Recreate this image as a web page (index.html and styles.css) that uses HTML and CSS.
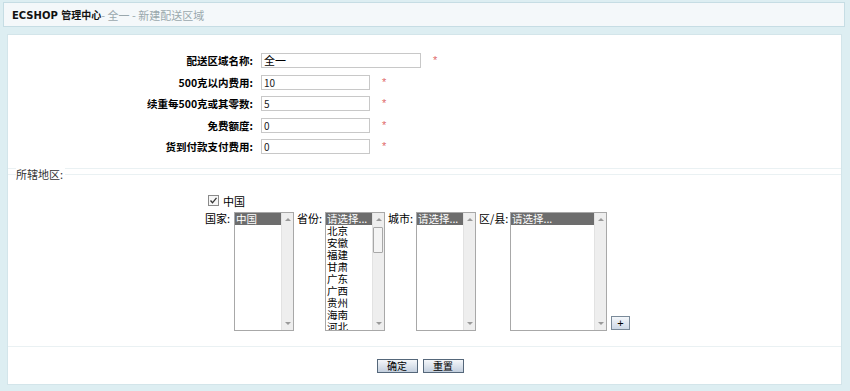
FILE: index.html
```html
<!DOCTYPE html>
<html>
<head>
<meta charset="utf-8">
<link rel="stylesheet" href="styles.css">
</head>
<body>
<div class="header"><span class="brand">ECSHOP 管理中心</span><span class="crumb">- 全一 - 新建配送区域</span></div>
<div class="main">
  <div class="form-section">
    <div class="row"><div class="label">配送区域名称:</div><div class="input wide">全一</div><span class="req">*</span></div>
    <div class="row"><div class="label">500克以内费用:</div><div class="input">10</div><span class="req">*</span></div>
    <div class="row"><div class="label">续重每500克或其零数:</div><div class="input">5</div><span class="req">*</span></div>
    <div class="row"><div class="label">免费额度:</div><div class="input">0</div><span class="req">*</span></div>
    <div class="row"><div class="label">货到付款支付费用:</div><div class="input">0</div><span class="req">*</span></div>
  </div>
  <div class="fieldset">
    <div class="legend">所辖地区:</div>
    <div class="region">
      <div class="check-row"><span class="checkbox"><svg width="9" height="9" viewBox="0 0 9 9"><path d="M1.5 4.5 L3.5 6.8 L7.5 1.8" fill="none" stroke="#333" stroke-width="1.3"/></svg></span><span class="check-label">中国</span></div>
      <div class="selects">
        <span class="sel-label l29">国家:</span>
        <div class="listbox w60">
          <div class="opts"><div class="opt selected">中国</div></div>
          <div class="sbar"><span class="arr up"></span><span class="arr down"></span></div>
        </div>
        <span class="sel-label l28">省份:</span>
        <div class="listbox w60">
          <div class="opts"><div class="opt selected">请选择...</div><div class="opt">北京</div><div class="opt">安徽</div><div class="opt">福建</div><div class="opt">甘肃</div><div class="opt">广东</div><div class="opt">广西</div><div class="opt">贵州</div><div class="opt">海南</div><div class="opt">河北</div></div>
          <div class="sbar"><span class="arr up"></span><span class="thumb"></span><span class="arr down"></span></div>
        </div>
        <span class="sel-label l28">城市:</span>
        <div class="listbox w60">
          <div class="opts"><div class="opt selected">请选择...</div></div>
          <div class="sbar"><span class="arr up"></span><span class="arr down"></span></div>
        </div>
        <span class="sel-label l31">区/县:</span>
        <div class="listbox w97">
          <div class="opts"><div class="opt selected">请选择...</div></div>
          <div class="sbar"><span class="arr up"></span><span class="arr down"></span></div>
        </div>
        <div class="plus">+</div>
      </div>
    </div>
  </div>
  <div class="buttons"><span class="btn">确定</span><span class="btn">重置</span></div>
</div>
</body>
</html>
```
FILE: styles.css
```css
html, body { margin: 0; padding: 0; }
body {
  background: #ddeef2;
  font-family: "Liberation Sans", "Noto Sans CJK SC", sans-serif;
  font-size: 11px;
  color: #000;
  width: 850px;
  height: 391px;
  overflow: hidden;
}
.header {
  margin: 2px 5px 0 3px;
  height: 23px;
  border: 1px solid #c6dde4;
  background: #f4f8fa;
  display: flex;
  align-items: center;
  padding-left: 8px;
  font-size: 11px;
}
.brand { font-family: "DejaVu Sans", "Noto Sans CJK SC", sans-serif; font-weight: bold; font-size: 10px; color: #111; }
.crumb { font-family: "Noto Sans CJK SC", sans-serif; color: #9aa8ad; font-size: 11px; }
.main {
  margin: 7px 8px 0 7px;
  height: 351px;
  background: #fff;
  border: 1px solid #d3e5ea;
  box-sizing: border-box;
  display: flex;
  flex-direction: column;
}
.form-section {
  padding-top: 15px;
  height: 118px;
  border-bottom: 1px solid #eaf1f3;
  flex: none;
}
.row {
  display: flex;
  align-items: center;
  height: 21.5px;
}
.label {
  width: 253px;
  text-align: right;
  font-family: "Noto Sans CJK SC", sans-serif;
  font-weight: bold;
  font-size: 10.5px;
  line-height: 13px;
  padding-right: 8px;
  box-sizing: border-box;
}
.input {
  width: 109px;
  height: 15px;
  border: 1px solid #c8c8c8;
  box-sizing: border-box;
  font-family: "Noto Sans CJK SC", "Liberation Sans", sans-serif;
  font-size: 10px;
  line-height: 13px;
  padding-left: 2px;
  color: #222;
}
.input.wide { width: 160px; color: #000; font-size: 11px; }
.req { color: #e06a6a; margin-left: 12px; font-size: 11px; line-height: 11px; }
.fieldset {
  margin-top: 5px;
  border-top: 1px solid #eaf1f3;
  border-bottom: 1px solid #eaf1f3;
  height: 171px;
  position: relative;
  flex: none;
}
.legend {
  position: absolute;
  top: -7px;
  left: 8px;
  background: #fff;
  padding-right: 2px;
  font-family: "Noto Sans CJK SC", sans-serif;
  font-size: 11px;
  line-height: 12px;
  color: #333;
}
.region { padding-left: 197px; padding-top: 20px; }
.check-row { display: flex; align-items: center; height: 11px; margin-left: 3px; }
.checkbox {
  width: 9px; height: 9px; border: 1px solid #8a8a8a; background: #f6f6f6;
  display: inline-flex; box-sizing: content-box;
}
.checkbox svg { display: block; }
.check-label { margin-left: 4px; font-family: "Noto Sans CJK SC", sans-serif; font-size: 11px; line-height: 12px; }
.selects { display: flex; align-items: flex-start; margin-top: 6px; }
.sel-label { font-family: "Noto Sans CJK SC", sans-serif; font-size: 11px; line-height: 12px; flex: none; white-space: nowrap; }
.l29 { width: 29px; }
.l28 { width: 28px; }
.l31 { width: 31px; }
.listbox {
  height: 119px;
  border: 1px solid #a8a8a8;
  box-sizing: border-box;
  display: flex;
  margin-right: 3px;
  background: #fff;
  flex: none;
}
.w60 { width: 60px; }
.w97 { width: 97px; }
.opts { flex: 1; overflow: hidden; }
.opt { font-family: "Noto Sans CJK SC", sans-serif; font-size: 10.5px; line-height: 12px; height: 12px; padding-left: 1px; white-space: nowrap; }
.opt.selected { background: #6d6d6d; color: #fff; }
.sbar {
  width: 11px;
  background: #eeeeee;
  border-left: 1px solid #e2e2e2;
  position: relative;
  flex: none;
}
.arr { position: absolute; left: 3px; width: 0; height: 0; border-left: 3px solid transparent; border-right: 3px solid transparent; }
.arr.up { top: 5px; border-bottom: 3px solid #9a9a9a; }
.arr.down { bottom: 5px; border-top: 3px solid #9a9a9a; }
.thumb { position: absolute; left: 0px; top: 14px; width: 8px; height: 24px; border: 1px solid #a8a8a8; background: #f4f4f4; border-radius: 1px; }
.plus {
  align-self: flex-end;
  margin-left: 1px;
  margin-bottom: 1px;
  width: 19px; height: 14px;
  border: 1px solid #7a8a99;
  box-sizing: border-box;
  background: linear-gradient(#f4f7fb, #cdd8e6);
  font-size: 11px; line-height: 12px; text-align: center;
  flex: none;
}
.buttons { display: flex; justify-content: center; gap: 5px; padding-top: 12px; padding-right: 9px; }
.btn {
  width: 41px; height: 14px;
  border: 1px solid #55677a;
  box-sizing: border-box;
  background: linear-gradient(#f5f7fa, #c3cfde);
  font-family: "Noto Sans CJK SC", sans-serif;
  font-size: 10px; line-height: 12px; text-align: center;
}
```
